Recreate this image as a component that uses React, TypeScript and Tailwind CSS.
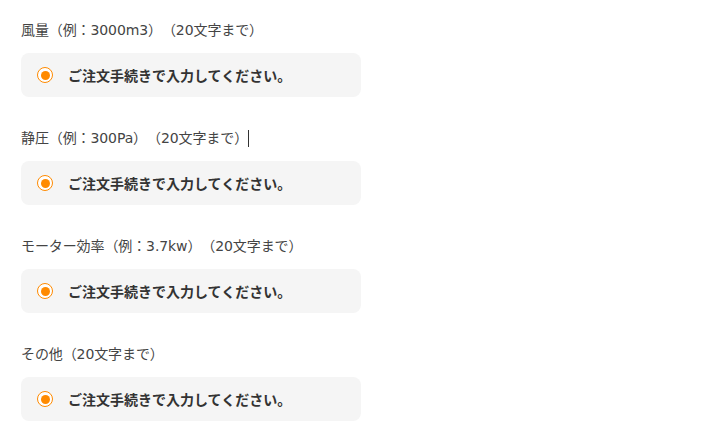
import React from "react";

const fields = [
  { label: "風量（例：3000m3）（20文字まで）", caret: false },
  { label: "静圧（例：300Pa）（20文字まで）", caret: true },
  { label: "モーター効率（例：3.7kw）（20文字まで）", caret: false },
  { label: "その他（20文字まで）", caret: false },
];

function Radio() {
  return (
    <span className="flex h-4 w-4 shrink-0 items-center justify-center rounded-full border-[1.5px] border-[#ff8a00] bg-white">
      <span className="h-[9px] w-[9px] rounded-full bg-[#ff8a00]" />
    </span>
  );
}

export default function App() {
  return (
    <div
      className="min-h-[434px] w-[727px] bg-white pl-[21px] pt-[19px] text-[#333] [text-spacing-trim:space-all]"
      style={{ fontFamily: '"Noto Sans CJK JP", "Noto Sans", sans-serif' }}
    >
      <div className="flex flex-col gap-[30px]">
        {fields.map((f) => (
          <div key={f.label} className="flex flex-col gap-[12px]">
            <div
              className="flex h-[22px] items-center text-[14px] leading-[22px] text-[#444]"
              style={{ fontFamily: '"DejaVu Sans", "Noto Sans CJK JP", sans-serif' }}
            >
              <span className="tracking-[-0.1px]">{f.label}</span>
              {f.caret && <span className="inline-block h-[17px] w-px bg-[#333]" />}
            </div>
            <div className="flex h-[44px] w-[340px] items-center gap-[15px] rounded-[8px] bg-[#f5f5f5] pl-[16px]">
              <Radio />
              <span className="text-[14px] font-bold text-[#333]">ご注文手続きで入力してください。</span>
            </div>
          </div>
        ))}
      </div>
    </div>
  );
}
